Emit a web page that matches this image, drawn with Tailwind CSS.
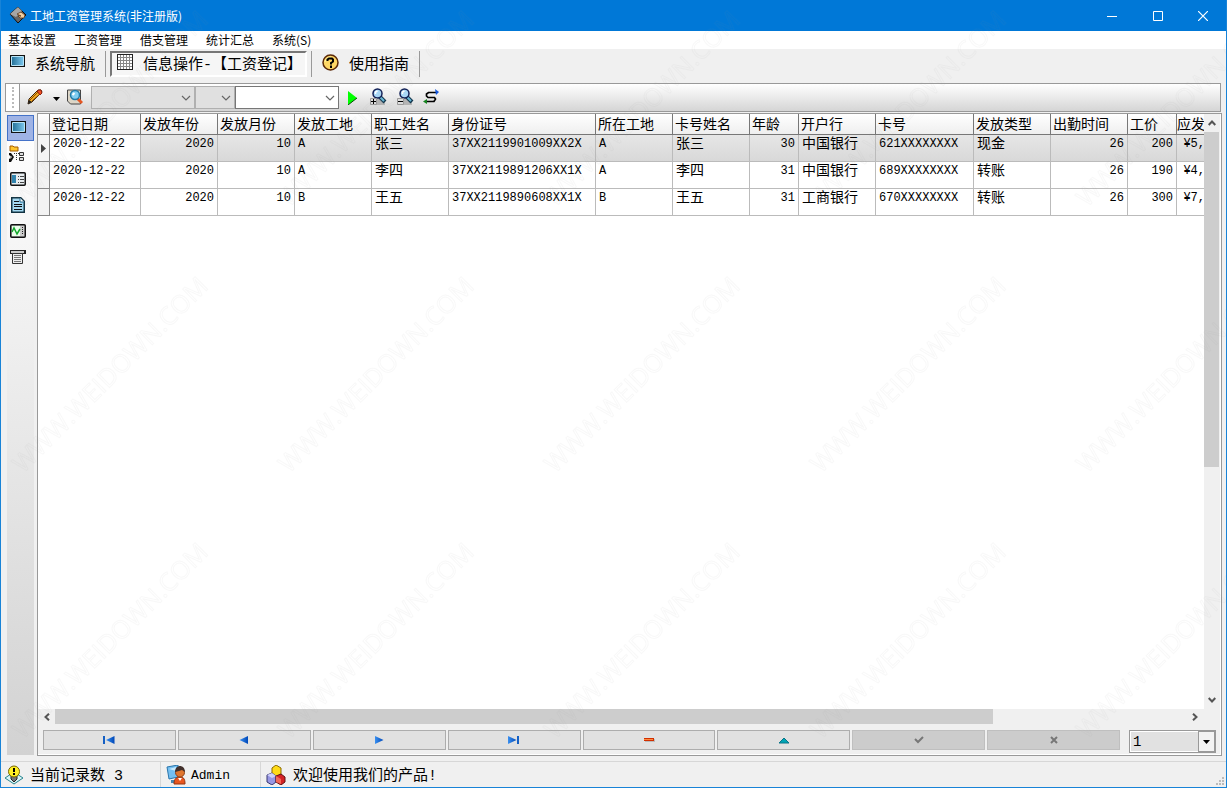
<!DOCTYPE html>
<html lang="zh-CN">
<head>
<meta charset="utf-8">
<title>工地工资管理系统</title>
<script src="https://cdn.jsdelivr.net/npm/@tailwindcss/browser@4"></script>
</head>
<body class="h-screen overflow-hidden text-black">
<svg class="absolute h-0 w-0" aria-hidden="true">
  <defs>
    <linearGradient id="screen" x1="0" x2="1" y2="0"><stop stop-color="#236f96"/><stop offset="1" stop-color="#7cc7ee"/></linearGradient>
    <linearGradient id="blue" x1="0" x2="1" y2="0"><stop stop-color="#3a90f0"/><stop offset="1" stop-color="#0048b8"/></linearGradient>
    <symbol id="monitor" viewBox="0 0 16 14"><path fill="#111" d="M0 1h15v12H0z"/><path fill="url(#screen)" stroke="#b9e4f7" d="M1.500 2.500h12v9h-12z"/></symbol>
    <symbol id="chev" viewBox="0 0 10 6"><path d="M1 1l4 4 4-4" fill="none" stroke="#666" stroke-width="1.200"/></symbol>
    <symbol id="lens" viewBox="0 0 18 18"><path d="M2 11h14v6H2z" fill="#b4b4b4"/><path d="M10 8l6 6" stroke="#12354c" stroke-width="4"/><path d="M10 8l5 5" stroke="#68b9d8" stroke-width="2"/><circle cx="8.500" cy="5.500" r="4.500" fill="#a9d8f7" stroke="#111f55" stroke-width="1.500"/><path d="M6.500 6V4l2-1" stroke="#fff" fill="none" stroke-width="1.500"/></symbol>
    <pattern id="wm" width="266" height="266" y="227" patternUnits="userSpaceOnUse">
      <text x="22" y="247" transform="rotate(-45 22 247)" font-family="Open Sans, sans-serif" font-size="25" fill="none" stroke="#808080" stroke-opacity=".06" stroke-width="1">WWW.WEIDOWN.COM</text>
    </pattern>
  </defs>
</svg>
<div class="relative flex h-full flex-col border-x border-b border-[#1883d7] bg-[#f0f0f0] font-['Liberation_Sans','Noto_Sans_CJK_SC',sans-serif]">
  <header class="flex h-[31px] shrink-0 items-center bg-[#0078d7] pl-2 text-xs text-white">
    <svg class="mr-[3px] mb-[2px] h-[18px] w-[18px]" viewBox="0 0 18 18"><path d="M1 8l8-7 8 8-8 8z" fill="#666" stroke="#111"/><path d="M1 8l8-7 4 4-6 6z" fill="#a5a5a5"/><path d="M8 8l4-2 4 3-1 3h-4l-2-2h3z" fill="#f0cda0" stroke="#5b3518" stroke-width=".8"/></svg>
    <h1 class="font-['Noto_Sans_CJK_SC',sans-serif]">工地工资管理系统(非注册版)</h1>
    <div class="ml-auto flex h-full">
      <button class="flex w-[46px] items-center justify-center" aria-label="最小化"><svg class="h-[10px] w-[10px]" viewBox="0 0 10 10"><path d="M0 5.500h10" stroke="#fff"/></svg></button>
      <button class="flex w-[45px] items-center justify-center" aria-label="最大化"><svg class="h-[10px] w-[10px]" viewBox="0 0 10 10"><path d="M.5.5h9v9h-9z" fill="none" stroke="#fff"/></svg></button>
      <button class="flex w-[46px] items-center justify-center" aria-label="关闭"><svg class="h-[10px] w-[10px]" viewBox="0 0 10 10"><path d="M0 0l10 10M10 0L0 10" stroke="#fff" stroke-width="1.200"/></svg></button>
    </div>
  </header>
  <nav class="flex h-[18px] shrink-0 items-center gap-[18px] bg-white pl-[7px] font-['Noto_Sans_CJK_SC',sans-serif] text-xs">
    <button>基本设置</button><button>工资管理</button><button>借支管理</button><button>统计汇总</button><button>系统(S)</button>
  </nav>
  <div class="flex h-[34px] shrink-0 pt-[2px] font-['Liberation_Mono','Noto_Sans_CJK_SC',sans-serif] text-[15px]">
    <button class="flex h-[26px] w-[105px] items-center gap-[9px] border-r border-[#999] pl-[9px]"><svg class="mb-[6px] h-[14px] w-4"><use href="#monitor"/></svg><span class="pt-1">系统导航</span></button>
    <button class="ml-1 flex h-[26px] w-[197px] items-center gap-[10px] border-2 border-[#777] border-r-white border-b-white bg-[#f6f6f6] pl-[5px]">
      <svg class="mb-1 h-4 w-4 shrink-0" viewBox="0 0 16 16"><path d="M0 0h16v16H0z" fill="#222"/><path d="M1 1h14v14H1z" fill="#fff"/><path d="M3.500 1v14M6.500 1v14M9.500 1v14M12.500 1v14M1 3.500h14M1 6.500h14M1 9.500h14M1 12.500h14" stroke="#888"/></svg>
      <span class="pt-1 whitespace-nowrap">信息操作-【工资登记】</span></button>
    <button class="ml-1 flex h-[26px] w-[109px] items-center gap-[10px] border-x border-[#999] pl-[10px]">
      <svg class="mb-1 h-[17px] w-[17px]" viewBox="0 0 17 17"><circle cx="8.500" cy="8.500" r="7.500" fill="#ffd765" stroke="#5b2908" stroke-width="1.500"/><path d="M3 8a6 6 0 0 1 6-5" fill="none" stroke="#fff5a5"/><path d="M5.500 7V5.500l1.500-1h3l1 1v2L9 9v1.500" fill="none" stroke="#000" stroke-width="2"/><path d="M8 11.500h2V14H8z"/></svg><span class="pt-1">使用指南</span></button>
  </div>
  <div class="mr-[5px] ml-1 flex h-[29px] shrink-0 items-center border border-[#999] bg-linear-to-b from-white to-[#d5d5d5]">
    <div class="flex h-full w-[14px] justify-center border-r border-[#999] bg-white"><div class="my-[3px] w-0 border-l-2 border-dotted border-[#bbb]"></div></div>
    <button class="ml-[7px] flex items-center gap-[10px] pb-[2px]" aria-label="编辑">
      <svg class="h-4 w-4" viewBox="0 0 16 16"><path d="M1 15l1-5L11 1h3l1 2-10 10z" fill="#f5ad21" stroke="#38200b"/><path d="M3 11l8-8M5 12l8-7" stroke="#8b4b08"/><path d="M10 2l2-1h2l1 3-2 2z" fill="#f25126" stroke="#8a2410"/><path d="M1 15l1-4 3 2z" fill="#222"/></svg>
      <svg class="mt-1 h-1 w-[7px]" viewBox="0 0 7 4"><path d="M0 0h7L3.500 4z"/></svg></button>
    <button class="ml-[7px] pb-[2px]" aria-label="查找"><svg class="h-4 w-4" viewBox="0 0 16 16"><path d="M.5 1h13v14h-10l-3-3z" fill="#ddd6c7" stroke="#444"/><path d="M10 9l5 5" stroke="#e55622" stroke-width="3"/><circle cx="8" cy="6" r="4.500" fill="#82cef1" stroke="#247ca8" stroke-width="1.500"/><path d="M5.500 6l2-2" stroke="#fff" stroke-width="2"/></svg></button>
    <div class="relative ml-2 flex h-[23px]"><select aria-label="字段" class="w-[104px] appearance-none border border-[#b0b0b0] bg-[#e0e0e0]" disabled><option></option></select><svg class="absolute top-[9px] right-1 h-[6px] w-[10px]"><use href="#chev"/></svg></div>
    <div class="relative flex h-[23px]"><select aria-label="条件" class="w-[40px] appearance-none border border-[#b0b0b0] bg-[#e0e0e0]" disabled><option></option></select><svg class="absolute top-[9px] right-1 h-[6px] w-[10px]"><use href="#chev"/></svg></div>
    <div class="relative flex h-[23px]"><select aria-label="值" class="w-[104px] appearance-none border border-[#777] bg-white"><option></option></select><svg class="absolute top-[9px] right-1 h-[6px] w-[10px]"><use href="#chev"/></svg></div>
    <button class="ml-[9px]" aria-label="执行"><svg class="h-[14px] w-[9px]" viewBox="0 0 9 14"><path d="M0 0l9 7-9 7z" fill="#0f0"/><path d="M0 14l9-7" stroke="#064d06"/></svg></button>
    <button class="ml-3 pb-[2px]" aria-label="放大"><svg class="h-[18px] w-[18px]" viewBox="0 0 18 18"><use href="#lens"/><path d="M1.500 10.500h6v6h-6z" fill="#ddd" stroke="#999"/><path d="M2 13.500h5M4.500 11v5" stroke="#000"/></svg></button>
    <button class="ml-[9px] pb-[2px]" aria-label="缩小"><svg class="h-[18px] w-[18px]" viewBox="0 0 18 18"><use href="#lens"/><path d="M1.500 10.500h6v6h-6z" fill="#ddd" stroke="#999"/><path d="M2 13.500h5" stroke="#000"/></svg></button>
    <button class="ml-[9px] pb-[2px]" aria-label="刷新"><svg class="h-4 w-4" viewBox="0 0 16 16"><path d="M13 3.500H5.500L3.500 5v2L5 8.500h6.500l1 1.500-1.500 2.500H3" fill="none" stroke="#000" stroke-width="1.700"/><path d="M12 0l4 3-3 3z" fill="#1357dd"/><path d="M4 10L0 12.500 4 15z" fill="#168421"/></svg></button>
  </div>
  <main class="mt-px flex min-h-0 flex-1 pr-1 pl-[6px]">
    <aside class="mt-[2px] mr-[3px] mb-px flex w-[27px] shrink-0 flex-col bg-linear-to-b from-white to-[#d2d2d2]">
      <button class="flex h-[26px] items-center border border-[#4472c8] bg-[#9fb3e5] pl-[3px]" aria-label="导航"><svg class="mb-[2px] h-[14px] w-4"><use href="#monitor"/></svg></button>
      <button class="flex h-[26px] items-center pl-[2px]" aria-label="目录"><svg class="mb-[2px] h-[17px] w-4" viewBox="0 0 16 17"><path d="M1 1h3l1 1h4v4H1z" fill="#ffc62d" stroke="#a45d00"/><path d="M0 8h2l3 4-3 5H0v-3l3-2-3-2z" fill="#111"/><path d="M1 11l2 1-2 2z" fill="#aaa"/><path d="M5 8.500h5M7.500 8v7" stroke="#333" stroke-dasharray="1 1"/><path d="M10.500 7.500h4v3h-4zM10.500 12.500h4v3h-4z" fill="#ddd" stroke="#333"/></svg></button>
      <button class="flex h-[26px] items-center pl-[3px]" aria-label="列表"><svg class="mb-[2px] h-[14px] w-4" viewBox="0 0 16 14"><rect x=".75" y=".75" width="14.500" height="12.500" rx="1" fill="#e7edf0" stroke="#111" stroke-width="1.500"/><path d="M2 3h4v8H2z" fill="#3184ae"/><path d="M8 4.500h1M8 7.500h1M8 10.500h1M10 4.500h4M10 7.500h4M10 10.500h4" stroke="#444"/></svg></button>
      <button class="flex h-[26px] items-center pl-1" aria-label="文档"><svg class="mb-[2px] h-4 w-[14px]" viewBox="0 0 14 16"><path d="M.75.75h9l3.500 3.500v11H.75z" fill="#a5daf2" stroke="#123342" stroke-width="1.500"/><path d="M9 1v4h4" fill="#fff" stroke="#246b91"/><path d="M3 4.500h5M3 7.500h8M3 9.500h8M3 12.500h8" stroke="#111"/></svg></button>
      <button class="flex h-[26px] items-center pl-[3px]" aria-label="图表"><svg class="mb-[2px] h-[14px] w-4" viewBox="0 0 16 14"><rect x=".75" y=".75" width="14.500" height="12.500" rx="1" fill="#ccc" stroke="#111" stroke-width="1.500"/><path d="M2 2h8v10H2z" fill="#eaffea"/><path d="M2 8l2-4 3 6 3-5" fill="none" stroke="#13a72b" stroke-width="1.500"/><path d="M12.500 3v7" stroke="#222" stroke-dasharray="1 1"/></svg></button>
      <button class="flex h-[26px] items-center pl-[3px]" aria-label="报表"><svg class="mb-[2px] h-4 w-4" viewBox="0 0 16 16"><path d="M0 1h16v4H0z" fill="#222"/><path d="M1 2h13v2H1z" fill="#ccc"/><path d="M2.500 4.500h10v10h-10z" fill="#eee" stroke="#333"/><path d="M4 6.500h7M4 8.500h7M4 10.500h7M4 12.500h7" stroke="#777"/></svg></button>
    </aside>
    <section class="flex min-w-0 flex-1 flex-col border border-[#999] bg-[#f0f0f0] shadow-[inset_-1px_-1px_0_#fff]">
      <div class="flex min-h-0 flex-1 pr-[2px]">
        <div class="min-w-0 flex-1 overflow-hidden bg-white">
          <table class="w-[1167px] table-fixed border-separate border-spacing-0 text-left font-['Liberation_Mono','Noto_Sans_CJK_SC',sans-serif] text-sm leading-[18px]">
            <colgroup><col class="w-[12px]"><col class="w-[91px]"><col class="w-[77px]"><col class="w-[77px]"><col class="w-[77px]"><col class="w-[77px]"><col class="w-[147px]"><col class="w-[77px]"><col class="w-[77px]"><col class="w-[49px]"><col class="w-[77px]"><col class="w-[98px]"><col class="w-[77px]"><col class="w-[77px]"><col class="w-[49px]"><col class="w-[28px]"></colgroup>
            <thead><tr class="h-[21px] bg-linear-to-b from-white to-[#eee] [&>th]:border-r [&>th]:border-b [&>th]:border-[#777] [&>th]:p-0 [&>th]:pt-px [&>th]:pl-[2px] [&>th]:font-normal [&>th]:whitespace-nowrap [&>th:last-child]:border-r-0 [&>th:last-child]:pl-0">
              <th></th><th>登记日期</th><th>发放年份</th><th>发放月份</th><th>发放工地</th><th>职工姓名</th><th>身份证号</th><th>所在工地</th><th>卡号姓名</th><th>年龄</th><th>开户行</th><th>卡号</th><th>发放类型</th><th>出勤时间</th><th>工价</th><th>应发</th></tr></thead>
            <tbody class="[&_td]:border-r [&_td]:border-b [&_td]:border-[#bbb] [&_td]:p-0 [&_td]:px-[3px] [&_td]:align-top [&_td]:whitespace-nowrap [&_td:last-child]:border-r-0 [&_td:last-child]:px-0 [&_td:last-child]:text-right">
              <tr class="h-[27px] bg-linear-to-b from-[#e6e6e6] to-[#d8d8d8]"><th class="border-r border-b border-[#888] bg-[#f5f5f5] p-0 pl-[3px]"><svg class="h-[9px] w-[5px]" viewBox="0 0 5 9"><path d="M0 0l5 4.500L0 9z" fill="#444"/></svg></th><td class="bg-white text-xs leading-[18px]">2020-12-22</td><td class="text-right text-xs leading-[18px]">2020</td><td class="text-right text-xs leading-[18px]">10</td><td class="text-xs leading-[18px]">A</td><td>张三</td><td class="text-xs leading-[18px]">37XX2119901009XX2X</td><td class="text-xs leading-[18px]">A</td><td>张三</td><td class="text-right text-xs leading-[18px]">30</td><td>中国银行</td><td class="text-xs leading-[18px]">621XXXXXXXX</td><td>现金</td><td class="text-right text-xs leading-[18px]">26</td><td class="text-right text-xs leading-[18px]">200</td><td class="text-xs leading-[18px]">¥5,</td></tr>
              <tr class="h-[27px]"><th class="border-r border-b border-[#888] bg-[#f3f3f3] p-0"></th><td class="text-xs leading-[18px]">2020-12-22</td><td class="text-right text-xs leading-[18px]">2020</td><td class="text-right text-xs leading-[18px]">10</td><td class="text-xs leading-[18px]">A</td><td>李四</td><td class="text-xs leading-[18px]">37XX2119891206XX1X</td><td class="text-xs leading-[18px]">A</td><td>李四</td><td class="text-right text-xs leading-[18px]">31</td><td>中国银行</td><td class="text-xs leading-[18px]">689XXXXXXXX</td><td>转账</td><td class="text-right text-xs leading-[18px]">26</td><td class="text-right text-xs leading-[18px]">190</td><td class="text-xs leading-[18px]">¥4,</td></tr>
              <tr class="h-[27px]"><th class="border-r border-b border-[#888] bg-[#f3f3f3] p-0"></th><td class="text-xs leading-[18px]">2020-12-22</td><td class="text-right text-xs leading-[18px]">2020</td><td class="text-right text-xs leading-[18px]">10</td><td class="text-xs leading-[18px]">B</td><td>王五</td><td class="text-xs leading-[18px]">37XX2119890608XX1X</td><td class="text-xs leading-[18px]">B</td><td>王五</td><td class="text-right text-xs leading-[18px]">31</td><td>工商银行</td><td class="text-xs leading-[18px]">670XXXXXXXX</td><td>转账</td><td class="text-right text-xs leading-[18px]">26</td><td class="text-right text-xs leading-[18px]">300</td><td class="text-xs leading-[18px]">¥7,</td></tr>
            </tbody>
          </table>
        </div>
        <div class="flex w-[15px] shrink-0 flex-col">
          <button class="flex h-[18px] items-center justify-center" aria-label="向上滚动"><svg class="h-[6px] w-2" viewBox="0 0 8 6"><path d="M.7 5L4 1.500 7.300 5" fill="none" stroke="#555" stroke-width="2"/></svg></button>
          <div class="flex-1"><div class="h-3/5 bg-[#cdcdcd]"></div></div>
          <button class="flex h-[18px] items-center justify-center" aria-label="向下滚动"><svg class="h-[6px] w-2" viewBox="0 0 8 6"><path d="M.7 1L4 4.500 7.300 1" fill="none" stroke="#555" stroke-width="2"/></svg></button>
        </div>
      </div>
      <div class="mr-[17px] flex h-[15px] shrink-0">
        <button class="flex w-[17px] items-center justify-center" aria-label="向左滚动"><svg class="h-2 w-[6px]" viewBox="0 0 6 8"><path d="M5 .7L1.500 4 5 7.300" fill="none" stroke="#555" stroke-width="2"/></svg></button>
        <div class="flex-1"><div class="h-full w-[83%] bg-[#cdcdcd]"></div></div>
        <button class="flex w-[19px] items-center justify-center" aria-label="向右滚动"><svg class="h-2 w-[6px]" viewBox="0 0 6 8"><path d="M1 .7L4.500 4 1 7.300" fill="none" stroke="#555" stroke-width="2"/></svg></button>
      </div>
      <div class="flex h-[31px] shrink-0 items-start pt-[6px] pr-[5px] pl-[5px]">
        <div class="grid flex-1 grid-cols-8 gap-[2px] [&>button]:flex [&>button]:h-[20px] [&>button]:items-center [&>button]:justify-center [&>button]:border [&>button]:border-[#adadad] [&>button]:bg-[#e1e1e1] [&_svg]:h-[10px] [&_svg]:w-3">
          <button aria-label="首条"><svg viewBox="0 0 12 10"><path d="M0 1h2v8H0z" fill="#1560c4"/><path d="M11.500 1v8L3 5z" fill="url(#blue)"/></svg></button>
          <button aria-label="上一条"><svg viewBox="0 0 12 10"><path d="M10 1v8L1.500 5z" fill="url(#blue)"/></svg></button>
          <button aria-label="下一条"><svg viewBox="0 0 12 10"><path d="M2 1v8l8.500-4z" fill="url(#blue)"/></svg></button>
          <button aria-label="末条"><svg viewBox="0 0 12 10"><path d="M0 1v8l8.500-4z" fill="url(#blue)"/><path d="M9 1h2v8H9z" fill="#1560c4"/></svg></button>
          <button aria-label="删除"><svg viewBox="0 0 12 10"><path d="M2 4h10v3H2z" fill="#bbb"/><path d="M1 3h10v3H1z" fill="#d22f00"/><path d="M1 4h9v1H1z" fill="#ff8b42"/></svg></button>
          <button aria-label="编辑记录"><svg viewBox="0 0 12 10"><path d="M1 8l5-5 5 5z" fill="#00a5b5" stroke="#087488"/></svg></button>
          <button class="border-[#bfbfbf]! bg-[#ccc]!" disabled aria-label="保存"><svg viewBox="0 0 12 10"><path d="M2 4l3 3 5-5" fill="none" stroke="#777" stroke-width="2"/></svg></button>
          <button class="border-[#bfbfbf]! bg-[#ccc]!" disabled aria-label="取消"><svg viewBox="0 0 12 10"><path d="M3 2l6 6M9 2L3 8" stroke="#777" stroke-width="2"/></svg></button>
        </div>
        <div class="relative ml-[9px] flex h-[23px] w-[87px] border border-[#999]">
          <select aria-label="页码" class="w-full appearance-none border border-white bg-[#e1e1e1] pl-[2px] font-['Liberation_Mono',monospace] text-sm"><option>1</option></select>
          <span class="pointer-events-none absolute inset-y-0 right-0 flex w-[17px] items-center justify-center border border-[#999] bg-[#f3f3f3]"><svg class="h-1 w-[7px]" viewBox="0 0 7 4"><path d="M0 0h7L3.500 4z"/></svg></span>
        </div>
      </div>
    </section>
  </main>
  <footer class="mt-[5px] flex h-[26px] shrink-0 items-center border-t border-[#d7d7d7] font-['Liberation_Mono','Noto_Sans_CJK_SC',sans-serif] text-[15px]">
    <div class="flex h-full w-[160px] items-center gap-[6px] border-r border-[#d7d7d7] pl-[3px]">
      <svg class="h-5 w-5" viewBox="0 0 20 20"><path d="M1 13l9-6 9 6-9 6z" fill="#d9f3f5" stroke="#27858f"/><path d="M7 10h6v4l-3 3-3-3z" fill="#777" stroke="#222"/><circle cx="10" cy="6.500" r="5.500" fill="#ffef25" stroke="#766500"/><path d="M9 3h2v4H9zM9 8h2v2H9z"/></svg><span class="pt-[5px]">当前记录数 3</span></div>
    <div class="flex h-full w-[100px] items-center gap-[5px] border-r border-[#d7d7d7] pl-[5px]">
      <svg class="h-5 w-5" viewBox="0 0 20 20"><path d="M1 2l11-2v12L3 14z" fill="#74bff1" stroke="#2975ac"/><path d="M3 4l7-2v4z" fill="#c8eaff"/><path d="M5 15h6l-1 3H5z" fill="#4689b5"/><path d="M8 19c0-6 3-7 6-7s5 1 5 7z" fill="#e95720" stroke="#943411"/><circle cx="14" cy="7.500" r="4.500" fill="#e0762f" stroke="#8e4017"/><path d="M9 7c0-8 10-8 10 0l-3-2-3 1z" fill="#42302c"/><path d="M12 13l2 3 2-3z" fill="#fff"/></svg><span class="pt-[3px] text-[13px]">Admin</span></div>
    <div class="flex flex-1 items-center gap-[7px] pl-[5px]">
      <svg class="h-5 w-5" viewBox="0 0 20 20"><path d="M6 3l4-3 5 3v6l-4 3-5-3z" fill="#ffdb17" stroke="#8a6900"/><path d="M1 10l5-2 4 3v6l-4 3-5-3z" fill="#9797e4" stroke="#383870"/><path d="M1 10l5 3 4-2-4-3z" fill="#d0d0fb"/><path d="M10 11l5-2 4 3v5l-4 3-5-3z" fill="#d42326" stroke="#611013"/><path d="M10 11l5 3v5l-5-2z" fill="#f36757"/></svg><span class="pt-[5px]">欢迎使用我们的产品!</span></div>
    <svg class="h-[10px] w-[10px] self-end" viewBox="0 0 10 10"><path d="M6 0h2v2H6zM3 3h2v2H3zM6 3h2v2H6zM0 6h2v2H0zM3 6h2v2H3zM6 6h2v2H6z" fill="#bbb"/></svg>
  </footer>
  <svg class="pointer-events-none absolute inset-0 h-full w-full" aria-hidden="true"><rect width="100%" height="100%" fill="url(#wm)"/></svg>
</div>
</body>
</html>
